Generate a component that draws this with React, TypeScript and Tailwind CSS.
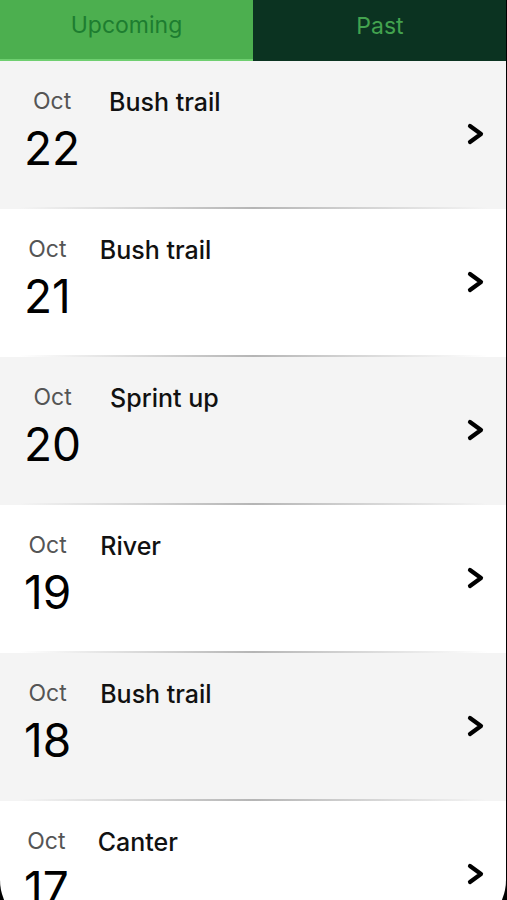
import { useState } from 'react'

const runs = [
  { day: 22, title: 'Bush trail' },
  { day: 21, title: 'Bush trail' },
  { day: 20, title: 'Sprint up' },
  { day: 19, title: 'River' },
  { day: 18, title: 'Bush trail' },
  { day: 17, title: 'Canter' },
]

function Chevron() {
  return (
    <svg width="22" height="24" viewBox="0 0 22 24" fill="none">
      <polyline
        points="5,4 16,12 5,20"
        stroke="#000"
        strokeWidth="4.2"
        strokeLinecap="round"
        strokeLinejoin="round"
      />
    </svg>
  )
}

export default function App() {
  const [tab, setTab] = useState<'upcoming' | 'past'>('upcoming')

  return (
    <div className="relative w-[507px] h-[900px] overflow-hidden bg-white font-['Inter',sans-serif]">
      {/* Tabs */}
      <div className="flex h-[61px]">
        <button
          onClick={() => setTab('upcoming')}
          className="w-[253px] bg-[#4caf4f] border-b-2 border-[#6fcf70] text-[23px] text-[#1d7d30] pb-[9px]"
        >
          Upcoming
        </button>
        <button
          onClick={() => setTab('past')}
          className="flex-1 bg-[#0b3321] text-[23px] text-[#43a34f] pb-[9px]"
        >
          Past
        </button>
      </div>

      {/* List */}
      <div>
        {runs.map((run, i) => (
          <div key={run.day} className={i % 2 === 0 ? 'bg-[#f4f4f4]' : 'bg-white'}>
            <div className="flex items-start h-[146px] pl-[24px] pr-[20px] pt-[29px]">
              <div className="flex flex-col items-center">
                <span className="text-[23px] leading-none text-[#555]">Oct</span>
                <span className="mt-[12px] text-[46px] leading-none text-black">{run.day}</span>
              </div>
              <span className="ml-[29px] text-[25px] leading-none font-medium text-[#111]">{run.title}</span>
              <div className="ml-auto mt-[32px]">
                <Chevron />
              </div>
            </div>
            <div className="h-[2px] mx-[20px] bg-gradient-to-r from-transparent via-[#b5b5b5] to-transparent" />
          </div>
        ))}
      </div>

      {/* device frame corners */}
      <div className="pointer-events-none absolute left-0 right-[1px] top-0 h-[930px] rounded-b-[50px] shadow-[0_0_0_30px_#000]" />
    </div>
  )
}
